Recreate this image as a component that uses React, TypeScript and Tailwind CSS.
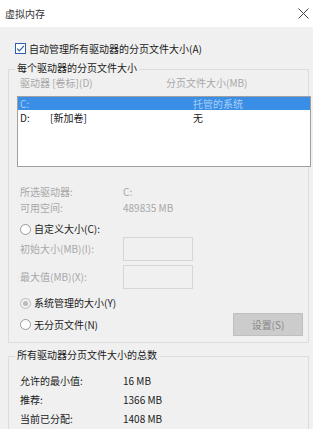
const font = "font-['Microsoft_YaHei','Noto_Sans_CJK_SC',sans-serif]";

const Radio = ({checked, disabled}: {checked?: boolean; disabled?: boolean}) => (
    <span
        className={`flex h-[11px] w-[11px] shrink-0 items-center justify-center rounded-full border ${
            disabled ? 'border-[#bcbcbc] bg-[#f0f0f0]' : 'border-[#9a9a9a] bg-white'
        }`}
    >
        {checked && <span className="h-[5px] w-[5px] rounded-full bg-[#bcbcbc]" />}
    </span>
);

/* 分组框，标题压在上边框上 */
const GroupBox = ({title, className, children}: {title: string; className?: string; children: React.ReactNode}) => (
    <div className={`relative border border-[#dcdcdc] ${className ?? ''}`}>
        <span className="absolute -top-[10px] left-[6px] bg-[#f0f0f0] px-[2px] leading-[16px] text-[#1a1a1a]">
            {title}
        </span>
        {children}
    </div>
);

export default function App() {
    return (
        <div className={`h-[429px] w-[313px] overflow-hidden bg-[#f0f0f0] text-[10px] leading-[16px] ${font}`}>
            {/* 标题栏 */}
            <div className="flex h-[27px] items-center justify-between bg-white pl-[5px] pr-[3px]">
                <span className="text-[#333]">虚拟内存</span>
                <svg width="11" height="11" viewBox="0 0 11 11" className="mr-[1px]">
                    <path d="M0.5 0.5L10.5 10.5M10.5 0.5L0.5 10.5" stroke="#444" strokeWidth="1" />
                </svg>
            </div>

            {/* 自动管理 */}
            <div className="ml-[15px] mt-[16px] flex h-[11px] items-center gap-[3px]">
                <span className="flex h-[11px] w-[11px] items-center justify-center border border-[#2e5fa8] bg-white">
                    <svg width="9" height="9" viewBox="0 0 9 9">
                        <path d="M1.2 4.6L3.4 6.8L7.9 1.8" stroke="#2e5fa8" strokeWidth="1.2" fill="none" />
                    </svg>
                </span>
                <span className="text-[#1a1a1a]">自动管理所有驱动器的分页文件大小(A)</span>
            </div>

            {/* 每个驱动器 */}
            <GroupBox title="每个驱动器的分页文件大小" className="ml-[8px] mt-[15px] mr-[4px] pb-[6px]">
                <div className="mt-[5px] flex text-[#a8a8a8]">
                    <span className="ml-[11px] w-[146px]">驱动器 [卷标](D)</span>
                    <span>分页文件大小(MB)</span>
                </div>
                <div className="ml-[8px] -mr-[3px] mt-[5px] h-[71px] border border-[#a0a0a0] bg-white">
                    <div className="flex h-[13px] items-center bg-[#3a8ee6] leading-[13px] text-[#a9cff7]">
                        <span className="ml-[2px] w-[173px]">C:</span>
                        <span>托管的系统</span>
                    </div>
                    <div className="flex h-[15px] items-center leading-[15px] text-[#1a1a1a]">
                        <span className="ml-[2px] w-[30px]">D:</span>
                        <span className="w-[143px]">[新加卷]</span>
                        <span>无</span>
                    </div>
                </div>

                <div className="ml-[11px] mt-[17px] text-[#a8a8a8]">
                    <div className="flex">
                        <span className="w-[103px]">所选驱动器:</span>
                        <span>C:</span>
                    </div>
                    <div className="flex">
                        <span className="w-[103px]">可用空间:</span>
                        <span>489835 MB</span>
                    </div>
                </div>

                <div className="ml-[11px] mt-[5px] flex h-[16px] items-center gap-[3px] text-[#1a1a1a]">
                    <Radio />
                    <span>自定义大小(C):</span>
                </div>
                <div className="ml-[11px] flex items-center text-[#a8a8a8]">
                    <span className="w-[103px]">初始大小(MB)(I):</span>
                    <span className="h-[24px] w-[70px] border border-[#d6d6d6]" />
                </div>
                <div className="ml-[11px] mt-[4px] flex items-center text-[#a8a8a8]">
                    <span className="w-[103px]">最大值(MB)(X):</span>
                    <span className="h-[24px] w-[70px] border border-[#d6d6d6]" />
                </div>

                <div className="ml-[11px] mt-[6px] flex h-[16px] items-center gap-[3px] text-[#1a1a1a]">
                    <Radio checked disabled />
                    <span>系统管理的大小(Y)</span>
                </div>
                <div className="ml-[11px] mt-[2px] flex h-[23px] items-center text-[#1a1a1a]">
                    <Radio />
                    <span className="ml-[3px]">无分页文件(N)</span>
                    <span className="ml-auto mr-[5px] flex h-[23px] w-[70px] items-center justify-center border border-[#bfbfbf] bg-[#cccccc] text-[#888]">
                        设置(S)
                    </span>
                </div>
            </GroupBox>

            {/* 总数 */}
            <GroupBox title="所有驱动器分页文件大小的总数" className="ml-[8px] mt-[13px] mr-[4px] h-[100px]">
                <div className="ml-[11px] mt-[14px] text-[#1a1a1a]">
                    {[
                        ['允许的最小值:', '16 MB'],
                        ['推荐:', '1366 MB'],
                        ['当前已分配:', '1408 MB'],
                    ].map(([label, value]) => (
                        <div key={label} className="flex h-[19px] items-center">
                            <span className="w-[103px]">{label}</span>
                            <span>{value}</span>
                        </div>
                    ))}
                </div>
            </GroupBox>
        </div>
    );
}
